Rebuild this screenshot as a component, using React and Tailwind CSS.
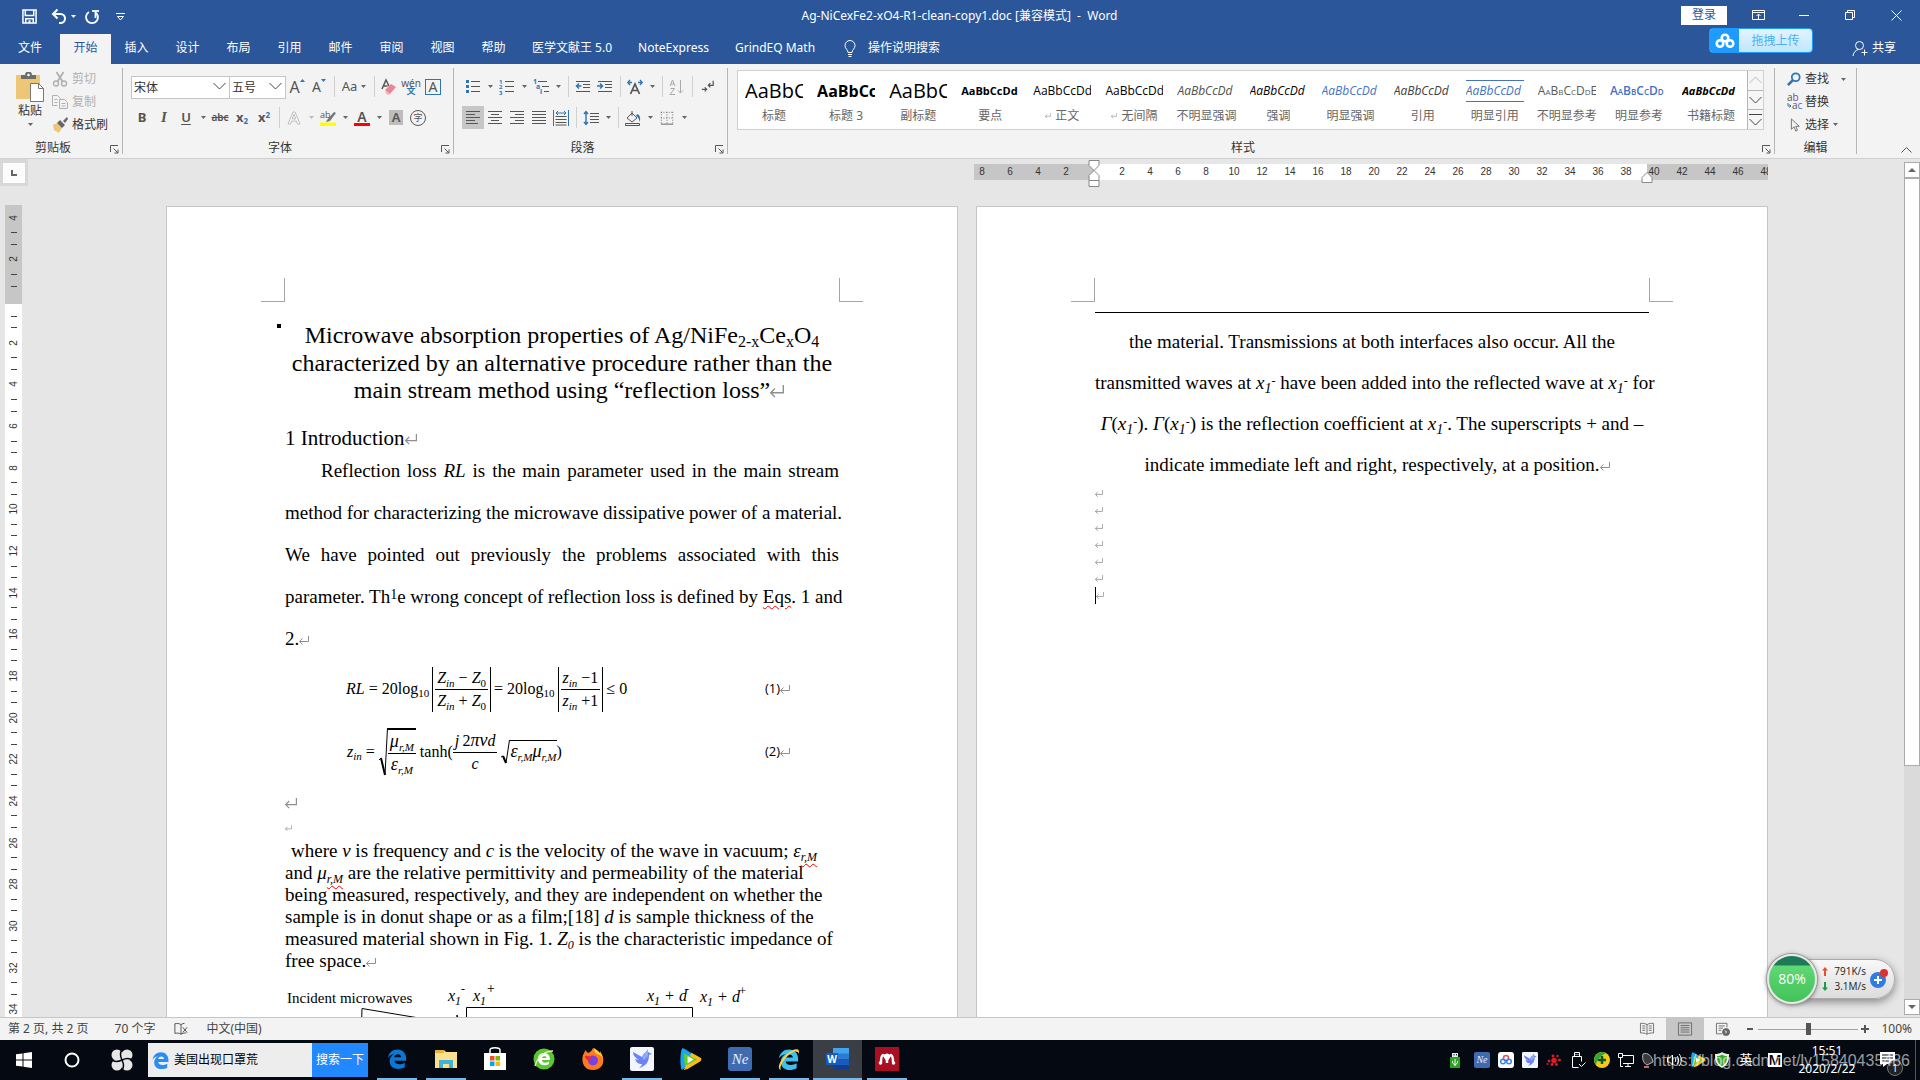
import { useState } from 'react';

const tabs = ['开始', '插入', '设计', '布局', '引用', '邮件', '审阅', '视图', '帮助'];

const styles = [
  { name: '标题', sample: 'AaBbC', cls: 'text-xl text-black' },
  { name: '标题 3', sample: 'AaBbCc', cls: 'text-base font-bold text-black' },
  { name: '副标题', sample: 'AaBbC', cls: 'text-xl text-black' },
  { name: '要点', sample: 'AaBbCcDd', cls: 'text-[11px] font-bold text-black' },
  { name: '正文', sample: 'AaBbCcDd', cls: 'text-xs text-black', mark: true },
  { name: '无间隔', sample: 'AaBbCcDd', cls: 'text-xs text-black', mark: true },
  { name: '不明显强调', sample: 'AaBbCcDd', cls: 'text-xs italic text-[#505050]' },
  { name: '强调', sample: 'AaBbCcDd', cls: 'text-xs italic text-black' },
  { name: '明显强调', sample: 'AaBbCcDd', cls: 'text-xs italic text-[#4472c4]' },
  { name: '引用', sample: 'AaBbCcDd', cls: 'text-xs italic text-[#404040]' },
  { name: '明显引用', sample: 'AaBbCcDd', cls: 'text-xs italic text-[#4472c4] border-y border-[#4472c4]' },
  { name: '不明显参考', sample: 'AaBbCcDdE', cls: 'text-xs text-[#5a5a5a] [font-variant:small-caps]' },
  { name: '明显参考', sample: 'AaBbCcDd', cls: 'text-xs font-semibold text-[#4472c4] [font-variant:small-caps]' },
  { name: '书籍标题', sample: 'AaBbCcDd', cls: 'text-[11px] font-bold italic text-black' },
];

const rulerNumbers = Array.from({ length: 29 }, (_, i) => Math.abs(i * 2 - 8));
const sideNumbers = Array.from({ length: 20 }, (_, i) => Math.abs(i * 2 - 4));

function Svg({ size = 16, children, className = '', label }) {
  return (
    <svg
      width={size}
      height={size}
      viewBox="0 0 16 16"
      fill="none"
      stroke="currentColor"
      className={`shrink-0 overflow-visible ${className}`}
      aria-hidden={label ? undefined : true}
      aria-label={label}
    >
      {children}
    </svg>
  );
}

function Arrow({ className = 'text-[#666]' }) {
  return (
    <svg width="5" height="3" viewBox="0 0 5 3" className={`shrink-0 ${className}`} aria-hidden="true">
      <path d="M0 0h5L2.5 3z" fill="currentColor" />
    </svg>
  );
}

function Tool({ label, children, active }) {
  return (
    <button
      type="button"
      aria-label={label}
      className={`flex h-[23px] w-[22px] shrink-0 items-center justify-center text-[#555] ${active ? 'bg-[#c6c6c6]' : ''}`}
    >
      {children}
    </button>
  );
}

function Drop({ label, faded }) {
  return (
    <button type="button" aria-label={label} className="flex h-[23px] w-3 shrink-0 items-center justify-center">
      <Arrow className={faded ? 'text-[#bbb]' : 'text-[#666]'} />
    </button>
  );
}

function Sep() {
  return (
    <div className="flex h-[21px] w-2 shrink-0 justify-center">
      <div className="w-px bg-[#d0d0d0]" />
    </div>
  );
}

function Group({ title, launcher = true, className = '', children }) {
  return (
    <section className={`my-1 flex flex-col border-r border-[#b5b5b5] ${className}`}>
      <div className="min-h-0 flex-1">{children}</div>
      <div className="flex h-3 items-center text-xs leading-3 text-[#333]">
        <span className="flex-1 text-center">{title}</span>
        {launcher && (
          <button type="button" aria-label={`${title}设置`} className="flex h-3 w-4 items-end justify-center">
            <svg width="9" height="9" viewBox="0 0 9 9" fill="none" stroke="#555" aria-hidden="true">
              <path d="M.5 7V.5H8M3.5 3.5l4 4M8 4.5V8H4.5" />
            </svg>
          </button>
        )}
      </div>
    </section>
  );
}

function TitleBar() {
  return (
    <div className="relative flex h-[34px] items-center pb-0.5 text-white">
      <div className="flex flex-1 items-center pt-px">
        <button type="button" aria-label="保存" className="ml-[22px]">
          <Svg size={15}>
            <path d="M1 1h14v14H1zM3.5 1v6h9V1M4 15v-4.500h8V15" strokeWidth="1.600" />
            <path d="M7 12h2v3H7z" fill="currentColor" stroke="none" />
          </Svg>
        </button>
        <button type="button" aria-label="撤消" className="ml-[14px]">
          <Svg>
            <path d="M3 5h6.500a4.500 4.500 0 0 1 0 9H8" strokeWidth="2" />
            <path d="M6.500.5 2 5l4.500 4.500" strokeWidth="2" />
          </Svg>
        </button>
        <span className="ml-1">
          <Arrow className="text-white" />
        </span>
        <button type="button" aria-label="重复" className="ml-2">
          <Svg>
            <path d="M5 3a6 6 0 1 0 6 0M11.500 9V2.500" strokeWidth="1.800" />
            <path d="M8 2h7" strokeWidth="1.800" />
          </Svg>
        </button>
        <button type="button" aria-label="自定义快速访问工具栏" className="ml-4">
          <svg width="9" height="8" viewBox="0 0 9 8" fill="none" stroke="currentColor" aria-hidden="true">
            <path d="M0 .5h9M1.500 3.500h6L4.500 7z" />
          </svg>
        </button>
      </div>
      <h1 className="text-xs whitespace-pre">Ag-NiCexFe2-xO4-R1-clean-copy1.doc [兼容模式]  -  Word</h1>
      <div className="flex flex-1 items-center justify-end pr-px pb-0.5">
        <button type="button" className="h-[19px] w-[46px] bg-white text-xs leading-[18px] text-[#2b579a]">
          登录
        </button>
        <button type="button" aria-label="功能区显示选项" className="ml-2 flex w-[46px] justify-center">
          <svg width="13" height="10" viewBox="0 0 13 10" fill="none" stroke="currentColor" aria-hidden="true">
            <path d="M.5.5h12v9H.5zM.5 2.500h12M6.500 9V4.500M4.500 6l2-2 2 2" />
          </svg>
        </button>
        <button type="button" aria-label="最小化" className="flex w-[46px] justify-center">
          <span className="h-px w-[10px] bg-white" />
        </button>
        <button type="button" aria-label="还原" className="flex w-[46px] justify-center">
          <svg width="10" height="10" viewBox="0 0 10 10" fill="none" stroke="currentColor" aria-hidden="true">
            <path d="M.5 2.500h7v7h-7zM2.500 2.500v-2h7v7h-2" />
          </svg>
        </button>
        <button type="button" aria-label="关闭" className="flex w-[46px] justify-center">
          <svg width="11" height="11" viewBox="0 0 11 11" fill="none" stroke="currentColor" aria-hidden="true">
            <path d="m.5.5 10 10m0-10-10 10" />
          </svg>
        </button>
      </div>
      <button
        type="button"
        className="absolute top-7 right-[107px] z-10 flex h-[25px] w-[104px] items-center overflow-hidden rounded border border-[#1e9bff] bg-gradient-to-b from-[#e3f4ff] to-[#c0e6fc] text-xs text-[#4ab0f8]"
      >
        <span className="flex h-full w-[29px] items-center justify-center bg-[#1e9bff]">
          <svg width="20" height="16" viewBox="0 0 20 16" fill="none" stroke="#fff" strokeWidth="2.600" aria-hidden="true">
            <circle cx="10" cy="5" r="3.300" />
            <circle cx="5" cy="10.500" r="3.300" />
            <circle cx="15" cy="10.500" r="3.300" />
          </svg>
        </span>
        <span className="flex-1 text-center">拖拽上传</span>
      </button>
    </div>
  );
}

function TabBar() {
  const [active, setActive] = useState('开始');

  return (
    <nav className="flex h-[30px] items-stretch text-xs text-white">
      <button type="button" className="w-[60px] pb-0.5">文件</button>
      {tabs.map(tab => (
        <button
          key={tab}
          type="button"
          onClick={() => setActive(tab)}
          className={`w-[51px] pb-0.5 ${tab === active ? 'bg-[#f3f3f3] text-[#2b579a]' : ''}`}
        >
          {tab}
        </button>
      ))}
      <button type="button" className="px-[13px] pb-0.5">医学文献王 5.0</button>
      <button type="button" className="px-[13px] pb-0.5">NoteExpress</button>
      <button type="button" className="px-[13px] pb-0.5">GrindEQ Math</button>
      <button type="button" className="ml-4 flex items-center gap-3 pb-0.5">
        <svg width="12" height="17" viewBox="0 0 12 17" fill="none" stroke="currentColor" aria-hidden="true">
          <path d="M4 12.500c0-3-3-3.500-3-7a5 5 0 0 1 10 0c0 3.500-3 4-3 7zM4 14.500h4M4.500 16.500h3" />
        </svg>
        操作说明搜索
      </button>
      <button type="button" className="mr-6 ml-auto flex items-center gap-1 pb-0.5">
        <Svg>
          <circle cx="7.500" cy="5.500" r="4" />
          <path d="M1 16c.5-4 3-6 5.500-6.500M9.500 12.500h6M12.500 9.500v6" />
        </Svg>
        共享
      </button>
    </nav>
  );
}

function ClipboardGroup() {
  return (
    <Group title="剪贴板" className="w-[123px]">
      <div className="flex">
        <button type="button" className="ml-[14px] flex w-8 flex-col items-center text-xs leading-4 text-[#333]">
          <svg width="28" height="31" viewBox="0 0 28 31" className="mt-1" aria-hidden="true">
            <path d="M0 3h24v24H0z" fill="#eec677" />
            <path d="M5 7V3h4a3.500 3.500 0 0 1 7 0h4v4z" fill="#6d6d6d" />
            <circle cx="12.500" cy="3" r="1.300" fill="#fff" />
            <path d="M14.500 11.500h8l5 5v13h-13z" fill="#fff" stroke="#777" />
            <path d="M22.500 11.500v5h5" fill="none" stroke="#777" />
          </svg>
          <span>粘贴</span>
          <span className="mt-1">
            <Arrow />
          </span>
        </button>
        <div className="ml-[6px] flex flex-col text-xs">
          <button type="button" className="flex h-[22px] items-center gap-1 text-[#b0b0b0]">
            <Svg>
              <circle cx="4" cy="12.500" r="2.500" strokeWidth="1.400" />
              <circle cx="12" cy="12.500" r="2.500" strokeWidth="1.400" />
              <path d="m4.500 1 6 9.500M11.500 1l-6 9.500" strokeWidth="1.800" />
            </Svg>
            剪切
          </button>
          <button type="button" className="flex h-[23px] items-center gap-1 text-[#b0b0b0]">
            <Svg>
              <path d="M5.500 11.500h-5v-10h5l3 3v1M2.500 5.500h3M2.500 8.500h3M7.500 5.500h5l3 3v6h-8zM9.500 9.500h4M9.500 12h4" />
            </Svg>
            复制
          </button>
          <button type="button" className="flex h-[23px] items-center gap-1 text-[#333]">
            <Svg>
              <path d="m1 8 4-2 5 5-3 5-5-3z" fill="#eec677" stroke="none" />
              <path d="m5 6 3-3 5 5-3 3zM11 4l4-4 1 2-3 4z" fill="#666" stroke="none" />
            </Svg>
            格式刷
          </button>
        </div>
      </div>
    </Group>
  );
}

function Chevron() {
  return (
    <svg width="13" height="8" viewBox="0 0 13 8" fill="none" stroke="#444" className="pointer-events-none absolute top-[8px] right-1" aria-hidden="true">
      <path d="m.5 1 6 6 6-6" />
    </svg>
  );
}

function FontGroup() {
  return (
    <Group title="字体" className="w-[331px]">
      <div className="flex flex-col gap-2 pt-[7px] pl-2">
        <div className="flex h-[23px] items-center">
          <div className="relative w-[99px]">
            <select aria-label="字体" className="h-[23px] w-full appearance-none border border-[#c6c6c6] bg-white pl-0.5 text-xs text-[#333]">
              <option>宋体</option>
            </select>
            <Chevron />
          </div>
          <div className="relative w-14">
            <select aria-label="字号" className="h-[23px] w-full appearance-none border border-l-0 border-[#c6c6c6] bg-white pl-0.5 text-xs text-[#333]">
              <option>五号</option>
            </select>
            <Chevron />
          </div>
          <Tool label="增大字号">
            <span className="text-base leading-none">A</span>
            <span className="mb-3"><svg width="5" height="3" viewBox="0 0 5 3" aria-hidden="true"><path d="M0 3h5L2.500 0z" fill="#2e75b6" /></svg></span>
          </Tool>
          <Tool label="减小字号">
            <span className="text-sm leading-none">A</span>
            <span className="mb-3"><Arrow className="text-[#2e75b6]" /></span>
          </Tool>
          <Sep />
          <button type="button" aria-label="更改大小写" className="flex h-[23px] w-8 items-center justify-center gap-1 text-[13px] text-[#555]">
            Aa <Arrow />
          </button>
          <Sep />
          <Tool label="清除格式">
            <Svg>
              <path d="M1 10 5 1l3 6M2.500 7h4" strokeWidth="1.500" />
              <path d="m4 11 6-6 5 3-6 7z" fill="#e88794" stroke="none" />
              <path d="m4 11 5 4-1 1-3-1z" fill="#f4b6bd" stroke="none" />
            </Svg>
          </Tool>
          <Tool label="拼音指南">
            <span className="flex flex-col items-center text-[10px] leading-[8px]">
              <span>wén</span>
              <span className="text-[9px] font-bold text-[#2e75b6]">文</span>
            </span>
          </Tool>
          <Tool label="字符边框">
            <span className="flex h-4 w-4 items-center justify-center border border-[#2e75b6] text-sm leading-none">A</span>
          </Tool>
        </div>
        <div className="flex h-[23px] items-center">
          <Tool label="加粗"><span className="text-[13px] font-bold">B</span></Tool>
          <Tool label="倾斜"><span className="font-['Liberation_Serif'] text-[15px] font-bold italic">I</span></Tool>
          <Tool label="下划线"><span className="text-[13px] font-semibold underline underline-offset-2">U</span></Tool>
          <Drop label="下划线样式" />
          <Tool label="删除线"><span className="text-[10px] font-semibold line-through">abc</span></Tool>
          <Tool label="下标"><span className="text-[13px] font-bold">x<sub className="text-[8px] text-[#2e75b6]">2</sub></span></Tool>
          <Tool label="上标"><span className="text-[13px] font-bold">x<sup className="text-[8px] text-[#2e75b6]">2</sup></span></Tool>
          <Sep />
          <Tool label="文本效果">
            <Svg>
              <path d="M2 14 7 2h2l5 12h-2.500l-1-3h-5l-1 3zM6.200 9h3.600L8 4z" stroke="#bdbdbd" fill="#fff" />
            </Svg>
          </Tool>
          <Drop label="文本效果选项" faded />
          <Tool label="突出显示">
            <Svg>
              <path d="m7 10 7-8 2 1-6 8-4 1z" fill="#777" stroke="none" />
              <path d="M0 12.500h16V16H0z" fill="#ff0" stroke="none" />
              <text x="0" y="8" fontSize="9" fontFamily="Open Sans" fill="#555" stroke="none">ab</text>
            </Svg>
          </Tool>
          <Drop label="突出显示颜色" />
          <Tool label="字体颜色">
            <span className="flex w-4 flex-col items-center">
              <span className="text-sm leading-[13px] font-semibold">A</span>
              <span className="h-[3px] w-full bg-[#f00]" />
            </span>
          </Tool>
          <Drop label="字体颜色选项" />
          <Tool label="字符底纹"><span className="w-[14px] bg-[#bdbdbd] text-center text-[13px] leading-[15px] font-semibold">A</span></Tool>
          <Tool label="带圈字符"><span className="flex h-4 w-4 items-center justify-center rounded-full border border-[#555] text-[9px] leading-none">字</span></Tool>
        </div>
      </div>
    </Group>
  );
}

function ParagraphGroup() {
  return (
    <Group title="段落" className="w-[274px]">
      <div className="flex flex-col gap-2 pt-[7px] pl-2">
        <div className="flex h-[23px] items-center">
          <Tool label="项目符号">
            <Svg>
              <path d="M6 2.500h9M6 7.500h9M6 12.500h9" />
              <path d="M1 1h3v3H1zM1 6h3v3H1zM1 11h3v3H1z" fill="#2e75b6" stroke="none" />
            </Svg>
          </Tool>
          <Drop label="项目符号库" />
          <Tool label="编号">
            <Svg>
              <path d="M6 2.500h9M6 7.500h9M6 12.500h9" />
              <g fill="#2e75b6" stroke="none" fontSize="6" fontFamily="Open Sans" fontWeight="700">
                <text x="0" y="4.500">1</text>
                <text x="0" y="10">2</text>
                <text x="0" y="15.500">3</text>
              </g>
            </Svg>
          </Tool>
          <Drop label="编号库" />
          <Tool label="多级列表">
            <Svg>
              <path d="M5 2.500h9M9 7.500h7M11 12.500h5" />
              <g fill="#2e75b6" stroke="none" fontSize="7" fontFamily="Open Sans" fontWeight="700">
                <text x="0" y="5">1</text>
                <text x="3" y="10">a</text>
                <text x="7" y="15">i</text>
              </g>
            </Svg>
          </Tool>
          <Drop label="列表库" />
          <Sep />
          <Tool label="减少缩进量">
            <Svg>
              <path d="M1 2.500h14M8 5.500h7M8 8.500h7M1 12.500h14" />
              <path d="M6.500 7H2M4 4.500 1.500 7 4 9.500" stroke="#2e75b6" strokeWidth="1.500" />
            </Svg>
          </Tool>
          <Tool label="增加缩进量">
            <Svg>
              <path d="M1 2.500h14M8 5.500h7M8 8.500h7M1 12.500h14" />
              <path d="M0 7h5M3 4.500 5.500 7 3 9.500" stroke="#2e75b6" strokeWidth="1.500" />
            </Svg>
          </Tool>
          <Sep />
          <Tool label="中文版式">
            <Svg>
              <path d="m3.500 15 4.500-10 4.500 10M5.500 11.500h5" strokeWidth="1.700" />
              <path d="M1 3.500h4M11 3.500h4M3 1 .8 3.500 3 6M13 1l2.200 2.500L13 6" stroke="#2e75b6" strokeWidth="1.300" />
            </Svg>
          </Tool>
          <Drop label="中文版式选项" />
          <Sep />
          <Tool label="排序">
            <Svg className="text-[#aaa]">
              <path d="m1 7 2.500-6L6 7M2 5h3M1.500 9.500h4l-4.500 6h5M11.500 1v13M9 11.500l2.500 2.500 2.500-2.500" />
            </Svg>
          </Tool>
          <Sep />
          <Tool label="显示编辑标记">
            <Svg size={13}>
              <path d="M15 1v5.500H9.500M11.500 4 9 6.500 11.500 9M1 11.500h6M4.500 9 7 11.500 4.500 14" strokeWidth="1.500" />
            </Svg>
          </Tool>
        </div>
        <div className="flex h-[23px] items-center">
          <Tool label="左对齐" active><Svg><path d="M1 1.500h14M1 4.500h9M1 7.500h14M1 10.500h9M1 13.500h12" /></Svg></Tool>
          <Tool label="居中"><Svg><path d="M1 1.500h14M4 4.500h8M1 7.500h14M4 10.500h8M1 13.500h14" /></Svg></Tool>
          <Tool label="右对齐"><Svg><path d="M1 1.500h14M6 4.500h9M1 7.500h14M6 10.500h9M1 13.500h14" /></Svg></Tool>
          <Tool label="两端对齐"><Svg><path d="M1 1.500h14M1 4.500h14M1 7.500h14M1 10.500h14M1 13.500h14" /></Svg></Tool>
          <Tool label="分散对齐">
            <Svg>
              <path d="M2.500 6.500h11M2.500 9.500h11M2.500 12.500h11M2.500 15h11" />
              <path d="M.5 0v16M15.500 0v16M3 3h10M5 1 3 3l2 2M11 1l2 2-2 2" stroke="#2e75b6" />
            </Svg>
          </Tool>
          <Sep />
          <Tool label="行距">
            <Svg>
              <path d="M7 3.500h9M7 6.500h9M7 9.500h9M7 12.500h9" />
              <path d="M3 1.500v13M1 4l2-2.500L5 4M1 12l2 2.500L5 12" stroke="#2e75b6" strokeWidth="1.400" />
            </Svg>
          </Tool>
          <Drop label="行距选项" />
          <Sep />
          <Tool label="底纹">
            <Svg>
              <path d="m2 8 5-5 5 5-5 4zM7 6V1M.5 13.500h14v2H.5z" />
              <path d="M12 4c3 1 4 4 2.500 8-.5-3-1-5-3.500-6z" fill="#2e75b6" stroke="none" />
            </Svg>
          </Tool>
          <Drop label="底纹颜色" />
          <Tool label="边框">
            <Svg size={14}>
              <path d="M1 1.500h14M1.500 1v14M14.500 1v14M8 1v14M1 8h14" strokeDasharray="1 2" />
              <path d="M1 15h14" />
            </Svg>
          </Tool>
          <Drop label="边框样式" />
        </div>
      </div>
    </Group>
  );
}

function StylesGroup() {
  return (
    <Group title="样式" className="min-w-0 flex-1">
      <div className="mt-0.5 mr-[10px] ml-[9px] flex h-[60px] border border-[#d0d0d0] bg-white">
        <div className="grid min-w-0 flex-1 grid-cols-14">
          {styles.map(style => (
            <button key={style.name} type="button" className="flex min-w-0 flex-col items-center">
              <span className="flex h-[38px] w-[58px] items-center overflow-hidden pt-0.5">
                <span className={`w-full shrink-0 text-left font-['Open_Sans'] leading-5 whitespace-nowrap ${style.cls}`}>
                  {style.sample}
                </span>
              </span>
              <span className="flex items-center gap-1 text-xs leading-[14px] whitespace-nowrap text-[#666]">
                {style.mark && <ParaMark size={6} />}
                {style.name}
              </span>
            </button>
          ))}
        </div>
        <div className="flex w-4 flex-col border-l border-[#b5b5b5] bg-[#f6f6f6] text-[#444]">
          <button type="button" aria-label="上一行" className="flex flex-1 items-center justify-center border-b border-[#b5b5b5] text-[#bbb]">
            <svg width="13" height="8" viewBox="0 0 13 8" fill="none" stroke="currentColor" aria-hidden="true"><path d="m.5 7 6-6 6 6" /></svg>
          </button>
          <button type="button" aria-label="下一行" className="flex flex-1 items-center justify-center border-b border-[#b5b5b5]">
            <svg width="13" height="8" viewBox="0 0 13 8" fill="none" stroke="currentColor" aria-hidden="true"><path d="m.5 1 6 6 6-6" /></svg>
          </button>
          <button type="button" aria-label="其他样式" className="flex flex-1 items-center justify-center">
            <svg width="13" height="12" viewBox="0 0 13 12" fill="none" stroke="currentColor" aria-hidden="true"><path d="M0 .5h13M.5 5l6 6 6-6" /></svg>
          </button>
        </div>
      </div>
    </Group>
  );
}

function EditingGroup() {
  return (
    <Group title="编辑" launcher={false} className="w-[82px]">
      <div className="flex flex-col pl-3 text-xs text-[#333]">
        <button type="button" className="flex h-[22px] items-center gap-1">
          <Svg size={14} className="text-[#2e75b6]">
            <circle cx="10" cy="6" r="4.500" strokeWidth="2" />
            <path d="m7 9-6 6" strokeWidth="3" />
          </Svg>
          查找
          <span className="ml-2"><Arrow /></span>
        </button>
        <button type="button" className="flex h-[23px] items-center gap-0.5">
          <svg width="16" height="17" viewBox="0 0 16 17" fontFamily="Open Sans" fontSize="10" className="overflow-visible" aria-hidden="true">
            <text x="0" y="8" fill="#555">a<tspan fill="#8540a8">b</tspan></text>
            <text x="5" y="16" fill="#555">a<tspan fill="#2e75b6">c</tspan></text>
            <path d="M1 10v3h3M2.500 11.500 4 13l-1.500 1.500" fill="none" stroke="#2e75b6" />
          </svg>
          替换
        </button>
        <button type="button" className="flex h-[23px] items-center gap-1">
          <Svg size={14} className="text-[#666]">
            <path d="M5 1v12l3-3 2 5 2-1-2-4.500h4z" />
          </Svg>
          选择
          <Arrow />
        </button>
      </div>
    </Group>
  );
}

function Ribbon() {
  return (
    <div className="flex h-[95px] border-b border-[#d0d0d0] bg-[#f3f3f3]">
      <ClipboardGroup />
      <FontGroup />
      <ParagraphGroup />
      <StylesGroup />
      <EditingGroup />
      <div className="flex w-[63px] items-end justify-end pr-2 pb-[5px]">
        <button type="button" aria-label="折叠功能区">
          <svg width="11" height="6" viewBox="0 0 11 6" fill="none" stroke="#555" aria-hidden="true"><path d="m.5 5.500 5-5 5 5" /></svg>
        </button>
      </div>
    </div>
  );
}

function ParaMark({ size = 10, className = '' }) {
  return (
    <svg width={size} height={size} viewBox="0 0 10 10" fill="none" stroke="#8f8f8f" className={`inline-block ${className}`} aria-hidden="true">
      <path d="M9.500 0v5.500h-9M3.500 2.500l-3 3 3 3" />
    </svg>
  );
}

function HorizontalRuler() {
  return (
    <div className="relative ml-auto w-[794px]">
      <div className="flex h-4 overflow-hidden bg-[linear-gradient(90deg,#c6c6c6_120px,#fff_120px,#fff_673px,#c6c6c6_673px)] font-['Liberation_Sans',sans-serif] text-[10px] leading-4 text-[#333]">
        {rulerNumbers.map((n, i) => (
          <span key={i} className="w-7 shrink-0 text-center first:-ml-[6px]">{n === 0 ? '' : n}</span>
        ))}
      </div>
      <svg width="12" height="28" viewBox="0 0 12 28" className="absolute -top-1 left-[114px]" fill="#fff" stroke="#888" aria-hidden="true">
        <path d="M1 .5h10v5L6 10.500l-5-5zM1 20.500v-5l5-5 5 5v5zM1 20.500h10v6H1z" />
      </svg>
      <svg width="12" height="11" viewBox="0 0 12 11" className="absolute top-2 left-[667px]" fill="#fff" stroke="#888" aria-hidden="true">
        <path d="M1 10.500v-5l5-5 5 5v5z" />
      </svg>
    </div>
  );
}

function VerticalRuler() {
  return (
    <div className="ml-[5px] flex w-[17px] flex-1 flex-col overflow-hidden bg-[linear-gradient(#c6c6c6_99px,#fff_99px)] font-['Liberation_Sans',sans-serif] text-[10px] text-[#333]">
      <div className="-mt-2 grid h-[833px] shrink-0 grid-rows-20">
        {sideNumbers.map((n, i) => (
          <div key={i} className="flex flex-col items-center justify-around">
            <span className="h-px w-[6px] bg-[#444]" />
            <span className="flex h-2 items-center justify-center">
              <span className="-rotate-90 leading-none">{n === 0 ? '' : n}</span>
            </span>
            <span className="h-px w-[6px] bg-[#444]" />
          </div>
        ))}
      </div>
    </div>
  );
}

function Page({ children }) {
  return (
    <article className="w-[792px] shrink-0 border border-b-0 border-[#c6c6c6] bg-white px-[118px] pt-[71px] font-['Liberation_Serif',serif] text-black">
      <div className="-mx-6 flex justify-between">
        <div className="h-6 w-6 border-r border-b border-[#a5a5a5]" />
        <div className="h-6 w-6 border-b border-l border-[#a5a5a5]" />
      </div>
      {children}
    </article>
  );
}

function Sub({ children }) {
  return <sub className="-bottom-1 text-[11px]">{children}</sub>;
}

function Greek({ children }) {
  return <span className="text-lg leading-none italic">{children}</span>;
}

function Frac({ top, bottom }) {
  return (
    <span className="inline-flex flex-col items-center">
      <span className="px-0.5 leading-[22px]">{top}</span>
      <span className="w-full border-t border-black px-0.5 text-center leading-[22px]">{bottom}</span>
    </span>
  );
}

function Abs({ children }) {
  return <span className="mx-[3px] inline-flex border-x border-black px-0.5">{children}</span>;
}

function Root({ children, tall }) {
  return (
    <span className="inline-flex items-stretch">
      {tall ? (
        <svg width="9" height="48" viewBox="0 0 9 48" fill="none" stroke="#000" aria-hidden="true">
          <path d="m0 32 2-2" />
          <path d="m2 30 4 17" strokeWidth="2" />
          <path d="M6 47 8.500 0" />
        </svg>
      ) : (
        <svg width="9" height="24" viewBox="0 0 9 24" fill="none" stroke="#000" aria-hidden="true">
          <path d="m0 17 2-1" />
          <path d="m2 16 3 7" strokeWidth="2" />
          <path d="M5 23 8.500 0" />
        </svg>
      )}
      <span className={tall ? 'border-t-2 border-black' : 'border-t border-black leading-[22px]'}>{children}</span>
    </span>
  );
}

function X1({ sign = '-' }) {
  return (
    <i>
      x<sub className="-bottom-1 text-sm">1</sub>
      <sup className="-top-1 text-xs">{sign}</sup>
    </i>
  );
}

function Misspelt({ children }) {
  return <span className="underline decoration-[#e00] decoration-wavy decoration-1 underline-offset-2">{children}</span>;
}

function Figure() {
  return (
    <svg width="554" height="60" viewBox="0 0 554 60" className="mt-[11px] block" fontFamily="Liberation Serif" role="img" aria-label="Incident microwaves">
      <text x="2" y="20" fontSize="15">Incident microwaves</text>
      <g fontSize="16" fontStyle="italic">
        <text x="163" y="18">x<tspan dy="4" fontSize="12">1</tspan><tspan dy="-12" fontSize="12">-</tspan></text>
        <text x="188" y="18">x<tspan dy="4" fontSize="12">1</tspan><tspan dy="-12" fontSize="14">+</tspan></text>
        <text x="362" y="18">x<tspan dy="4" fontSize="12">1</tspan><tspan dy="-4"> + d</tspan><tspan dy="-8" dx="-2" fontSize="12">-</tspan></text>
        <text x="415" y="19">x<tspan dy="4" fontSize="12">1</tspan><tspan dy="-4"> + d</tspan><tspan dy="-7" dx="-2" fontSize="13">+</tspan></text>
      </g>
      <path d="M181.500 60V24.500h226V60M76 60l1-34.500 96 16M169 60l3-28 4 10" fill="none" stroke="#000" />
    </svg>
  );
}

function FirstPage() {
  return (
    <Page>
      <h2 className="relative mt-5 text-center text-2xl leading-[27px] whitespace-nowrap">
        <span className="absolute top-0.5 -left-2 h-1 w-1 bg-black" />
        Microwave absorption properties of Ag/NiFe<sub className="-bottom-1 text-base">2-x</sub>Ce
        <sub className="-bottom-1 text-base">x</sub>O<sub className="-bottom-1 text-base">4</sub>
        <br />
        characterized by an alternative procedure rather than the
        <br />
        main stream method using “reflection loss”<ParaMark size={14} className="-mr-[14px]" />
      </h2>
      <h3 className="mt-[22px] text-[21px] leading-6">1 Introduction<ParaMark size={12} /></h3>
      <p className="text-[19px] leading-[42px] whitespace-nowrap">
        <span className="block pl-9 [text-align-last:justify]">
          Reflection loss <i>RL</i> is the main parameter used in the main stream
        </span>
        <span className="block [text-align-last:justify]">
          method for characterizing the microwave dissipative power of a material.
        </span>
        <span className="block [text-align-last:justify]">
          We have pointed out previously the problems associated with this
        </span>
        <span className="block [text-align-last:justify]">
          parameter. Th<sup className="-top-1 text-sm">1</sup>e wrong concept of reflection loss is defined by <Misspelt>Eqs</Misspelt>. 1 and
        </span>
        <span className="block">2.<ParaMark /></span>
      </p>
      <div className="mt-[6px] flex h-[46px] items-center pl-[61px] text-base whitespace-nowrap">
        <i>RL</i>&nbsp;= 20log<Sub>10</Sub>
        <Abs>
          <Frac
            top={<><i>Z</i><Sub><i>in</i></Sub> − <i>Z</i><Sub>0</Sub></>}
            bottom={<><i>Z</i><Sub><i>in</i></Sub> + <i>Z</i><Sub>0</Sub></>}
          />
        </Abs>
        = 20log<Sub>10</Sub>
        <Abs>
          <Frac top={<><i>z</i><Sub><i>in</i></Sub> −1</>} bottom={<><i>z</i><Sub><i>in</i></Sub> +1</>} />
        </Abs>
        ≤ 0
        <span className="mr-[49px] ml-auto font-['Open_Sans'] text-[13px]">(1)<ParaMark /></span>
      </div>
      <div className="mt-4 flex h-12 items-center pl-[62px] text-base whitespace-nowrap">
        <i>z</i><Sub><i>in</i></Sub>&nbsp;=&nbsp;
        <Root tall>
          <Frac top={<i><Greek>μ</Greek><Sub>r,M</Sub></i>} bottom={<i><Greek>ε</Greek><Sub>r,M</Sub></i>} />
        </Root>
        &nbsp;tanh(
        <Frac top={<><i>j</i>&thinsp;2<Greek>πν</Greek><i>d</i></>} bottom={<i>c</i>} />
        &nbsp;
        <Root>
          <i><Greek>ε</Greek><Sub>r,M</Sub><Greek>μ</Greek><Sub>r,M</Sub></i>
        </Root>
        )
        <span className="mr-[49px] ml-auto font-['Open_Sans'] text-[13px]">(2)<ParaMark /></span>
      </div>
      <div className="mt-[14px] flex h-[27px] items-center"><ParaMark size={12} /></div>
      <div className="flex h-[23px] items-center"><ParaMark size={7} /></div>
      <p className="text-[19px] leading-[22px] whitespace-nowrap">
        <span className="pl-[6px]">where <i>ν</i> is frequency and <i>c</i> is the velocity of the wave in vacuum; </span>
        <i>ε<sub className="-bottom-1 text-xs"><Misspelt>r,M</Misspelt></sub></i>
        <br />
        and <i>μ<sub className="-bottom-1 text-xs"><Misspelt>r,M</Misspelt></sub></i> are the relative permittivity and permeability of the material
        <br />
        being measured, respectively, and they are independent on whether the
        <br />
        sample is in donut shape or as a film;[18] <i>d</i> is sample thickness of the
        <br />
        measured material shown in Fig. 1. <i>Z<sub className="-bottom-1 text-xs">0</sub></i> is the characteristic impedance of
        <br />
        free space.<ParaMark />
      </p>
      <Figure />
    </Page>
  );
}

function SecondPage() {
  return (
    <Page>
      <hr className="mt-[10px] border-black" />
      <p className="mt-2 text-center text-[19px] leading-[41px] whitespace-nowrap">
        the material. Transmissions at both interfaces also occur. All the
        <br />
        transmitted waves at <X1 /> have been added into the reflected wave at <X1 /> for
        <br />
        <i>Γ</i>(<X1 />). <i>Γ</i>(<X1 />) is the reflection coefficient at <X1 />. The superscripts + and –
        <br />
        indicate immediate left and right, respectively, at a position.<ParaMark className="-mr-[10px]" />
      </p>
      {[1, 2, 3, 4, 5, 6].map(n => (
        <div key={n} className="flex h-[17px] items-center"><ParaMark size={8} /></div>
      ))}
      <div className="flex h-[17px] items-center border-l border-black"><ParaMark size={8} /></div>
    </Page>
  );
}

function ScrollBar() {
  return (
    <div className="mt-[3px] mb-0.5 flex w-4 flex-col bg-[#dadada]">
      <button type="button" aria-label="向上滚动" className="flex h-4 items-center justify-center border border-[#ababab] bg-white">
        <svg width="8" height="4" viewBox="0 0 8 4" aria-hidden="true"><path d="M0 4h8L4 0z" fill="#666" /></svg>
      </button>
      <div className="flex-[590] border border-[#ababab] bg-white" />
      <div className="flex-[234]" />
      <button type="button" aria-label="向下滚动" className="flex h-4 items-center justify-center border border-[#ababab] bg-white">
        <svg width="8" height="4" viewBox="0 0 8 4" aria-hidden="true"><path d="M0 0h8L4 4z" fill="#666" /></svg>
      </button>
    </div>
  );
}

function SpeedWidget() {
  return (
    <div className="absolute right-[25px] bottom-[13px] flex items-center">
      <div className="z-10 -mr-7 flex h-[50px] w-[50px] items-center justify-center rounded-full border-2 border-[#e8e8e8] bg-[linear-gradient(#1d7a57_9px,#5fd775_10px,#42c259)] font-['Open_Sans'] text-sm text-white shadow-[0_1px_5px_#666] ring-1 ring-[#999]">
        80%
      </div>
      <div className="flex h-10 w-[106px] items-center rounded-full border border-[#aaa] bg-gradient-to-b from-[#f8f8f8] to-[#dcdcdc] pl-[32px] shadow-[0_3px_8px_#888]">
        <div className="flex flex-col gap-[6px]">
          <svg width="6" height="9" viewBox="0 0 6 9" aria-hidden="true"><path d="M3 0 6 3.500H4V9H2V3.500H0z" fill="#e8502f" /></svg>
          <svg width="6" height="9" viewBox="0 0 6 9" aria-hidden="true"><path d="M3 9 6 5.500H4V0H2v5.500H0z" fill="#1b9a4b" /></svg>
        </div>
        <div className="ml-auto text-right font-['Open_Sans'] text-[10px] leading-[15px] text-[#222]">
          <div>791K/s</div>
          <div>3.1M/s</div>
        </div>
        <svg width="18" height="20" viewBox="0 0 18 20" className="mr-[6px] ml-1" aria-hidden="true">
          <circle cx="8" cy="11" r="8" fill="#2f7de0" />
          <path d="M8 7v8M4 11h8" stroke="#fff" strokeWidth="2" />
          <circle cx="14" cy="4" r="4" fill="#e03030" />
        </svg>
      </div>
    </div>
  );
}

function Workspace() {
  return (
    <main className="relative flex min-h-0 flex-1 overflow-hidden bg-[#e6e6e6]">
      <div className="flex w-[30px] shrink-0 flex-col">
        <div className="mb-[19px] flex h-[27px] w-7 items-center justify-center bg-[#d8d8d8] pr-px">
          <button type="button" aria-label="制表符" className="flex h-5 w-[22px] items-center justify-center bg-[#fcfcfc]">
            <svg width="6" height="6" viewBox="0 0 6 6" aria-hidden="true"><path d="M1 0v5h5" fill="none" stroke="#666" strokeWidth="2" /></svg>
          </button>
        </div>
        <VerticalRuler />
      </div>
      <div className="flex min-w-0 flex-1 justify-center overflow-hidden">
        <div className="flex flex-col gap-[26px] pt-[5px]">
          <HorizontalRuler />
          <div className="flex gap-[18px]">
            <FirstPage />
            <SecondPage />
          </div>
        </div>
      </div>
      <ScrollBar />
      <SpeedWidget />
    </main>
  );
}

function StatusBar() {
  return (
    <footer className="flex h-[23px] shrink-0 items-center border-t border-[#c6c6c6] bg-[#f3f3f3] pl-2 text-xs text-[#444]">
      <span>第 2 页, 共 2 页</span>
      <span className="ml-[26px]">70 个字</span>
      <Svg size={14} className="ml-[19px]">
        <path d="M8 14c-2-1.500-4-1.500-7-1V2c3-.5 5-.5 7 1zM8 3c1-1 3-1.500 4-1.500M10 6l5 6M15 6l-5 6M8 14c1.500-1 3-1.500 6-1.500" />
      </Svg>
      <span className="ml-[18px]">中文(中国)</span>
      <div className="ml-auto flex h-full items-center">
        <button type="button" aria-label="阅读视图" className="flex h-full w-[38px] items-center justify-center text-[#666]">
          <Svg size={14}><path d="M8 3v11M8 3C6 1.500 3 1.500 .5 1.500v11C3 12.500 6 12.500 8 14c2-1.500 5-1.500 7.500-1.500v-11C13 1.500 10 1.500 8 3M2.500 4.500H6M2.500 7H6M2.500 9.500H6M10 4.500h3.500M10 7h3.500M10 9.500h3.500" /></Svg>
        </button>
        <button type="button" aria-label="页面视图" className="flex h-full w-[38px] items-center justify-center bg-[#c6c6c6] text-[#666]">
          <Svg size={14}><path d="M.5 1h15v14H.5zM3 4h10M3 6.500h10M3 9h10M3 11.500h10" /></Svg>
        </button>
        <button type="button" aria-label="Web 版式视图" className="flex h-full w-[38px] items-center justify-center text-[#666]">
          <Svg size={14}>
            <path d="M7 13.500H.5v-12h12V6M3 4.500h7M3 7h5M3 9.500h3" />
            <circle cx="11.500" cy="11.500" r="4" fill="#666" />
            <path d="m10 10 2 1-1 2" stroke="#fff" />
          </Svg>
        </button>
        <button type="button" aria-label="缩小" className="ml-[3px] flex h-4 w-[10px] items-center justify-center">
          <span className="h-0.5 w-[6px] bg-[#555]" />
        </button>
        <div className="ml-[3px] flex h-4 w-[100px] items-center">
          <input
            type="range"
            min="0"
            max="200"
            defaultValue="100"
            aria-label="缩放"
            className="h-px w-full appearance-none bg-[#a0a0a0] [&::-webkit-slider-thumb]:h-3 [&::-webkit-slider-thumb]:w-[5px] [&::-webkit-slider-thumb]:appearance-none [&::-webkit-slider-thumb]:bg-[#555]"
          />
        </div>
        <button type="button" aria-label="放大" className="ml-[3px] flex h-4 w-[8px] items-center justify-center">
          <svg width="8" height="8" viewBox="0 0 8 8" aria-hidden="true"><path d="M0 4h8M4 0v8" stroke="#555" strokeWidth="2" /></svg>
        </button>
        <span className="mr-2 ml-3">100%</span>
      </div>
    </footer>
  );
}

function AppButton({ label, open, active, children }) {
  return (
    <button
      type="button"
      aria-label={label}
      className={`flex h-full w-[49px] flex-col items-center ${active ? 'bg-[#3a3f46]' : ''}`}
    >
      <span className="flex flex-1 items-center">{children}</span>
      <span className={`h-0.5 ${active ? 'w-full' : 'w-10'} ${open ? 'bg-[#76b9ed]' : ''}`} />
    </button>
  );
}

function EdgeE({ size, color, ring }) {
  return (
    <svg width={size} height={size} viewBox="0 0 24 24" aria-hidden="true">
      <path d="M2 11C3 5 7 1.500 12.500 1.500 18.500 1.500 22 6 22 11v3H9c.5 4 6.500 5 11.500 2v5C13 25 4 22.500 4 14.500 4 11 6 8 9 6.500 5.500 7 3 9 2 11zm7-1h7.500c0-4-6.500-4.500-7.500 0z" fill={color} />
      {ring && <path d="M4 23C-2 21 6 7 16 2.500 22 0 24 2 22.500 6 22 3 19 3 15.500 5 8 9.500 2 19 4 23z" fill={ring} />}
    </svg>
  );
}

function Bird({ size }) {
  return (
    <svg width={size} height={size} viewBox="0 0 24 24" aria-hidden="true">
      <rect width="24" height="24" rx="2" fill="#f3f6ff" />
      <path d="m3 5 9 5c1-3 3-5 6-5l4 2-3 1c0 7-3 11-10 13 2-2 3-3 3-4-4 0-6-2-7-5l4 1C5 11 3 8 3 5z" fill="#6d83f0" />
      <path d="m12 10 6-8v7l-4 4z" fill="#8fa8ff" />
    </svg>
  );
}

function NeIcon({ size }) {
  return (
    <svg width={size} height={size} viewBox="0 0 24 24" aria-hidden="true">
      <rect width="24" height="24" rx="3" fill="#3f6bb0" />
      <text x="12" y="17" textAnchor="middle" fontFamily="Liberation Serif" fontStyle="italic" fontSize="15" fill="#e8eefc">Ne</text>
    </svg>
  );
}

function PlayIcon({ size }) {
  return (
    <svg width={size} height={size} viewBox="0 0 24 24" aria-hidden="true">
      <path d="M3 1c0-1 1-1 3 0l8 5-7 14-4 3C1 20 1 5 3 1z" fill="#18a5f5" />
      <path d="m13 5 9 5c2 1.500 2 2.500 0 4L9 22l-4 1z" fill="#ffb91a" />
      <path d="M5 5.500 19 12 6 19z" fill="#5fcf2b" />
      <path d="M9 8.500 15.500 12 9 16z" fill="#fff" />
    </svg>
  );
}

function TaskBar() {
  return (
    <div className="relative flex h-10 shrink-0 items-center bg-[#050a12] text-white">
      <button type="button" aria-label="开始菜单" className="flex h-full w-12 items-center justify-center">
        <Svg><path d="m0 2.300 6.500-.9v6.100H0zM7.500 1.200 16 0v7.500H7.500zM0 8.500h6.500v6.100L0 13.700zM7.500 8.500H16V16l-8.500-1.200z" fill="#fff" stroke="none" /></Svg>
      </button>
      <button type="button" aria-label="Cortana" className="flex h-full w-12 items-center justify-center">
        <Svg><circle cx="8" cy="8" r="6.500" strokeWidth="2" /></Svg>
      </button>
      <button type="button" aria-label="小工具" className="flex h-full w-[52px] items-center justify-center">
        <svg width="22" height="22" viewBox="0 0 22 22" aria-hidden="true">
          <g fill="#e6e6e6">
            <circle cx="6" cy="6" r="5.500" />
            <circle cx="16" cy="6" r="5.500" />
            <circle cx="6" cy="16" r="5.500" />
            <circle cx="16" cy="16" r="5.500" />
            <path d="M6 6h10v10H6z" />
          </g>
          <path d="M11 11C9 7 9 3 11.500 0M11 11c4-2 8-2 11 .5M11 11c2 4 2 8-.5 11M11 11c-4 2-8 2-11-.5" fill="none" stroke="#050a12" strokeWidth="1.500" />
        </svg>
      </button>
      <div className="flex h-[34px] w-[220px] items-center bg-[#ededed]">
        <span className="pl-[3px]"><EdgeE size={19} color="#2a8df5" /></span>
        <input aria-label="搜索" defaultValue="美国出现口罩荒" className="min-w-0 flex-1 bg-transparent pl-1 text-xs text-black" />
        <button type="button" className="h-full w-14 bg-[#2288ff] text-xs">搜索一下</button>
      </div>
      <div className="ml-1 flex h-full">
        <AppButton label="Edge" open><EdgeE size={22} color="#0a78d6" /></AppButton>
        <AppButton label="文件资源管理器" open>
          <svg width="22" height="20" viewBox="0 0 22 20" aria-hidden="true">
            <path d="M0 1h9l2 2h11v16H0z" fill="#fde08d" />
            <path d="M0 1h9v3H0z" fill="#e8b33b" />
            <path d="M4 19v-8h14v8h-4v-4H8v4z" fill="#3fb2d8" />
          </svg>
        </AppButton>
        <AppButton label="应用商店">
          <svg width="22" height="24" viewBox="0 0 22 24" aria-hidden="true">
            <path d="M6 7V3c0-3 10-3 10 0v4" fill="none" stroke="#fff" strokeWidth="1.500" />
            <path d="M0 6h22v17H0z" fill="#fff" />
            <path d="M6 9h4.500v4.500H6z" fill="#f25022" />
            <path d="M11.500 9H16v4.500h-4.500z" fill="#7fba00" />
            <path d="M6 14.500h4.500V19H6z" fill="#00a4ef" />
            <path d="M11.500 14.500H16V19h-4.500z" fill="#ffb900" />
          </svg>
        </AppButton>
        <AppButton label="360 浏览器">
          <svg width="22" height="22" viewBox="0 0 22 22" aria-hidden="true">
            <circle cx="11" cy="11" r="10.500" fill="#5dc532" />
            <path d="M5 11c0-4 2.500-6 6-6s6 2 6 7H9c0 3 4 3.500 7 1.500V16c-6 3-11 0-11-5zm4-1h4.500c0-2.500-4-2.500-4.500 0z" fill="#fff" />
            <path d="M2 18C5 8 12 3 20 3" fill="none" stroke="#dff3b5" strokeWidth="1.500" />
          </svg>
        </AppButton>
        <AppButton label="Firefox">
          <svg width="24" height="24" viewBox="0 0 24 24" aria-hidden="true">
            <path d="M2 8c1-2 2-3 2-5 1 1 2 2 3 3 3-1 4-3 5-5 3 2 5 3 6 6 1-1 1-2 1-3 6 8 4 19-7 19C3 23 0 15 2 8z" fill="#ff7a1f" />
            <path d="M13 1c4 3 9 6 9 12-1-4-3-5-6-6-2-1-3-3-3-6z" fill="#ffd43a" />
            <circle cx="12" cy="13.500" r="5" fill="#7542e5" />
            <path d="M4 9c3-1 5 1 8 1-1 2-3 2-4 4-2-1-4-2-4-5z" fill="#e8283c" />
          </svg>
        </AppButton>
        <AppButton label="迅雷" open><Bird size={24} /></AppButton>
        <AppButton label="腾讯视频"><PlayIcon size={23} /></AppButton>
        <AppButton label="NoteExpress" open><NeIcon size={24} /></AppButton>
        <AppButton label="Internet Explorer" open><EdgeE size={23} color="#3fc0f0" ring="#ffd23a" /></AppButton>
        <AppButton label="Word" open active>
          <svg width="24" height="24" viewBox="0 0 24 24" aria-hidden="true">
            <path d="M7 1h16v22H7z" fill="#41a5ee" />
            <path d="M7 6.500h16V12H7z" fill="#2b7cd3" />
            <path d="M7 12h16v5.500H7z" fill="#185abd" />
            <path d="M7 17.500h16V23H7z" fill="#103f91" />
            <path d="M0 6h12v12H0z" fill="#185abd" />
            <text x="6" y="15.500" textAnchor="middle" fontFamily="Open Sans" fontWeight="700" fontSize="10" fill="#fff">W</text>
          </svg>
        </AppButton>
        <AppButton label="Mendeley" open>
          <svg width="24" height="24" viewBox="0 0 24 24" aria-hidden="true">
            <rect width="24" height="24" fill="#a80f22" />
            <circle cx="12" cy="9" r="2.400" fill="#fff" />
            <circle cx="5.500" cy="16" r="1.800" fill="#fff" />
            <circle cx="18.500" cy="16" r="1.800" fill="#fff" />
            <path d="M6 15c0-3 0-6 2-7 2 0 2 3 4 5 2-2 2-5 4-5 2 1 2 4 2 7M12 13v3" fill="none" stroke="#fff" strokeWidth="2.500" />
          </svg>
        </AppButton>
      </div>
      <Tray />
    </div>
  );
}

function TrayItem({ children, className = 'w-6' }) {
  return <span className={`flex items-center justify-center ${className}`}>{children}</span>;
}

function Tray() {
  return (
    <div className="relative ml-auto flex h-full items-center">
      <TrayItem className="w-[30px]">
        <svg width="10" height="15" viewBox="0 0 10 15" aria-hidden="true">
          <path d="M2 0h6v4H2z" fill="#e8e8e8" />
          <path d="M3.500 1h1v1.500h-1zM6 1h1v1.500H6z" fill="#333" />
          <path d="M0 4h10v11H0z" fill="#27a51f" />
          <path d="M5 6v7M2.500 8v2L5 12M7.500 8v2L5 12" fill="none" stroke="#fff" />
        </svg>
      </TrayItem>
      <TrayItem><NeIcon size={16} /></TrayItem>
      <TrayItem>
        <Svg>
          <rect width="16" height="16" rx="3" fill="#fff" stroke="none" />
          <circle cx="8" cy="6" r="2.500" stroke="#e8505b" strokeWidth="1.500" />
          <circle cx="5" cy="9.500" r="2.300" stroke="#2a8df5" strokeWidth="1.500" />
          <circle cx="11" cy="9.500" r="2.300" stroke="#2a8df5" strokeWidth="1.500" />
        </Svg>
      </TrayItem>
      <TrayItem><Bird size={16} /></TrayItem>
      <TrayItem>
        <Svg>
          <g fill="#e01b24" stroke="none">
            <circle cx="8" cy="8.500" r="2.700" />
            <circle cx="3" cy="9" r="1.500" />
            <circle cx="13.500" cy="8" r="1.500" />
            <circle cx="7" cy="4" r="1.400" />
            <circle cx="11.500" cy="4" r="1.200" />
            <circle cx="6" cy="12.500" r="1.400" />
            <circle cx="10.500" cy="12.500" r="1.400" />
            <circle cx="1.500" cy="12" r="1" />
          </g>
        </Svg>
      </TrayItem>
      <TrayItem>
        <Svg><path d="M4.500.5h5v4h-5zM2.500 4.500h9v5M2.500 4.500v11h6M9 12l2.500 2.500 4-4M6 2v1M8 2v1" /></Svg>
      </TrayItem>
      <TrayItem>
        <Svg>
          <circle cx="8" cy="8" r="8" fill="#f4ca1b" stroke="none" />
          <path d="M2 13A8 8 0 0 1 12 1C8 3 3 7 2 13z" fill="#2aa83a" stroke="none" />
          <path d="M8 4v8M4 8h8" stroke="#0c5c1e" strokeWidth="2.500" />
        </Svg>
      </TrayItem>
      <TrayItem>
        <Svg><path d="M.5 1.500h4v4h-4zM4.500 3.500h11v8H5M2.500 5.500v9H5M10 11.500v3M7 14.500h6" /></Svg>
      </TrayItem>
      <TrayItem>
        <Svg>
          <path d="M1 2c5-2 9 2 10 8L5 13C1 11 0 6 1 2z" fill="#3a3a3a" stroke="#bbb" />
          <path d="M2 15h5" stroke="#c66" strokeWidth="2" />
        </Svg>
      </TrayItem>
      <TrayItem>
        <Svg><path d="M1.500 6h2l3-3v10l-3-3h-2zM9 6c1 1 1 3 0 4M11 4c2 2 2 6 0 8M13 2c3 3 3 9 0 12" /></Svg>
      </TrayItem>
      <TrayItem><PlayIcon size={16} /></TrayItem>
      <TrayItem>
        <Svg>
          <path d="M8 0c2 1.500 4.500 2 7 2 0 7-1 11-7 14C2 13 1 9 1 2c2.500 0 5-.5 7-2z" fill="#e9f5e4" stroke="none" />
          <path d="M8 2.500c1.500 1 3 1.500 5 1.500 0 5-1 8-5 10-4-2-5-5-5-10 2 0 3.500-.5 5-1.500z" fill="#3fa52c" stroke="none" />
        </Svg>
      </TrayItem>
      <TrayItem><span className="text-[13px]">英</span></TrayItem>
      <TrayItem className="w-[34px]">
        <span className="flex h-[14px] w-[14px] items-center justify-center bg-white text-sm leading-none font-semibold text-black">M</span>
      </TrayItem>
      <div className="w-[70px] pb-px text-center text-xs leading-[18px]">
        <div>15:51</div>
        <div>2020/2/22</div>
      </div>
      <TrayItem className="w-[53px] pl-1">
        <svg width="26" height="26" viewBox="0 0 26 26" className="mt-2" aria-hidden="true">
          <path d="M2 1h15v12H9l-4 3v-3H2z" fill="#fff" />
          <path d="M4 4h11M4 7h11M4 10h7" stroke="#050a12" />
          <circle cx="17" cy="17" r="7.500" fill="#222" stroke="#777" />
          <text x="17" y="21" textAnchor="middle" fontFamily="Open Sans" fontSize="11" fill="#fff">1</text>
        </svg>
      </TrayItem>
      <span className="mr-1 h-full w-px bg-[#555]" />
      <span className="pointer-events-none absolute top-[9px] right-[10px] font-['Liberation_Sans',sans-serif] text-base text-white/60">
        https://blog.csdn.net/ly15840435486
      </span>
    </div>
  );
}

export default function App() {
  return (
    <div className="flex h-screen flex-col overflow-hidden font-['Noto_Sans','Noto_Sans_CJK_SC',sans-serif]">
      <header className="shrink-0 bg-[#2b579a]">
        <TitleBar />
        <TabBar />
      </header>
      <Ribbon />
      <Workspace />
      <StatusBar />
      <TaskBar />
    </div>
  );
}
